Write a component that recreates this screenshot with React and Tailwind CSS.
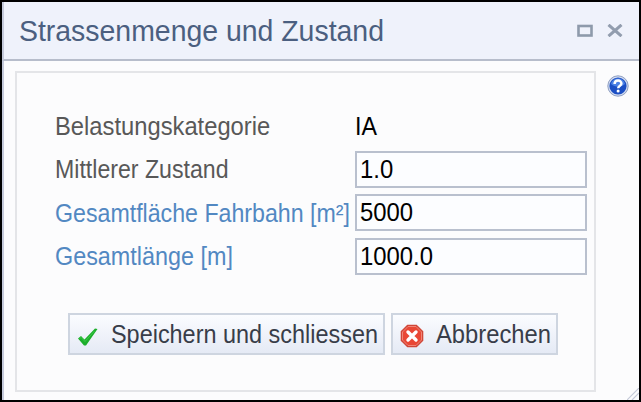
import React from "react";

function Field({ label, link, value, plain, scale }) {
  return (
    <div className="flex h-[43.5px] items-center">
      <div className={`w-[300px] shrink-0 origin-left whitespace-nowrap ${scale} ${link ? "text-[#5288c2]" : "text-[#585858]"}`}>
        {label}
      </div>
      {plain ? (
        <span className="origin-left scale-x-[0.93] text-black">{value}</span>
      ) : (
        <div className="h-[37px] w-[232px] border-2 border-[#b9c0ce] bg-[#fcfdff] pl-[3px]">
          <input
            defaultValue={value}
            className="h-full w-[230px] origin-left scale-x-[0.955] bg-transparent text-black outline-none"
          />
        </div>
      )}
    </div>
  );
}

function CheckIcon() {
  return (
    <svg width="22" height="20" viewBox="0 0 22 20" className="shrink-0">
      <path d="M1 11.500 4 9 7.500 12.500 18 1.500 20.500 2 9 18.500 7 18.500Z" fill="#1cae2b" />
      <path d="M2.500 11.500 4.200 10.500 8 14.500 17.500 4" fill="none" stroke="#3ccb48" strokeWidth="1" />
    </svg>
  );
}

function CancelIcon() {
  return (
    <svg width="24" height="24" viewBox="0 0 24 24" className="shrink-0">
      <path d="M7.300 .7h9.400l6.600 6.600v9.400l-6.600 6.600H7.300L.7 16.700V7.300Z" fill="#cf4638" />
      <path d="M8 2.500h8l5.500 5.500v8L16 21.500H8L2.500 16V8Z" fill="#e94735" stroke="#f08577" strokeWidth="1" />
      <path d="m8 8 8 8m0-8-8 8" stroke="#fff" strokeWidth="3.400" strokeLinecap="round" />
    </svg>
  );
}

function HelpIcon() {
  return (
    <svg width="22" height="22" viewBox="0 0 22 22">
      <circle cx="11" cy="11" r="10.200" fill="#d3dcef" stroke="#8f9fc2" strokeWidth="1" />
      <circle cx="11" cy="11" r="8.600" fill="#1c4fc4" />
      <path d="M4 9a7.200 7.200 0 0 1 14 0c-3 3-9 4-14 0Z" fill="#4c82e6" />
      <path d="M7.600 9c0-4.500 7-4.500 6.800-.3-.1 2.200-3.200 2-3.200 4.600" fill="none" stroke="#fff" strokeWidth="2.500" />
      <circle cx="11.100" cy="16" r="1.500" fill="#fff" />
    </svg>
  );
}

export default function App() {
  return (
    <div className="relative flex h-[402px] w-[641px] flex-col overflow-hidden border-2 border-black bg-[#fcfcfd] font-['Liberation_Sans',Arial,sans-serif] text-[25px] leading-[28px]">
      <header className="flex h-[59px] shrink-0 items-center justify-between border-b-2 border-l-2 border-b-[#b7bdcb] border-l-[#c5cadb] bg-[#eff2fb] pr-[16px] pl-[15px]">
        <h1 className="origin-left scale-x-[0.98] whitespace-nowrap text-[29px] leading-[32px] text-[#4b5f80]">Strassenmenge und Zustand</h1>
        <div className="flex items-center gap-[14px]">
          <svg width="16" height="13" viewBox="0 0 16 13">
            <rect x="1.500" y="2" width="13" height="9.500" fill="none" stroke="#8e9aab" strokeWidth="2.600" />
          </svg>
          <svg width="16" height="13" viewBox="0 0 16 13">
            <path d="M1.500 .8 14.500 12.200M14.500 .8 1.500 12.200" stroke="#929dae" strokeWidth="3" />
          </svg>
        </div>
      </header>
      <main className="flex min-h-0 flex-1 items-start border-l-2 border-[#c5cadb] pt-[10px] pl-[11px]">
        <section className="flex h-[321px] w-[581px] shrink-0 flex-col border-2 border-[#e4e5e8] pt-[31px] pl-[38px]">
          <Field label="Belastungskategorie" value="IA" plain scale="scale-x-[0.95]" />
          <Field label="Mittlerer Zustand" value="1.0" scale="scale-x-[0.925]" />
          <Field label="Gesamtfläche Fahrbahn [m²]" link value="5000" scale="scale-x-[0.927]" />
          <Field label="Gesamtlänge [m]" link value="1000.0" scale="scale-x-[0.935]" />
          <div className="mt-[35px] ml-[13px] flex gap-[6px]">
            <button className="flex h-[42px] w-[317px] items-center gap-[12px] border-2 border-[#ced5e0] bg-gradient-to-b from-[#fbfcff] to-[#e5eaf5] pl-[7px] whitespace-nowrap text-[#383d49]">
              <span className="mt-[6px]"><CheckIcon /></span>
              <span className="origin-left scale-x-[0.937]">Speichern und schliessen</span>
            </button>
            <button className="flex h-[42px] w-[167px] items-center gap-[12px] border-2 border-[#ced5e0] bg-gradient-to-b from-[#fbfcff] to-[#e5eaf5] pl-[7px] whitespace-nowrap text-[#383d49]">
              <span className="mt-[4px]"><CancelIcon /></span>
              <span className="origin-left scale-x-[0.95]">Abbrechen</span>
            </button>
          </div>
        </section>
        <div className="mt-[4px] ml-[11px]"><HelpIcon /></div>
      </main>
      <svg className="absolute right-0 bottom-0" width="12" height="12" viewBox="0 0 12 12">
        <path d="M0 12 12 0M5 12l7-7" stroke="#c4c9d8" strokeWidth="1.200" />
      </svg>
    </div>
  );
}
